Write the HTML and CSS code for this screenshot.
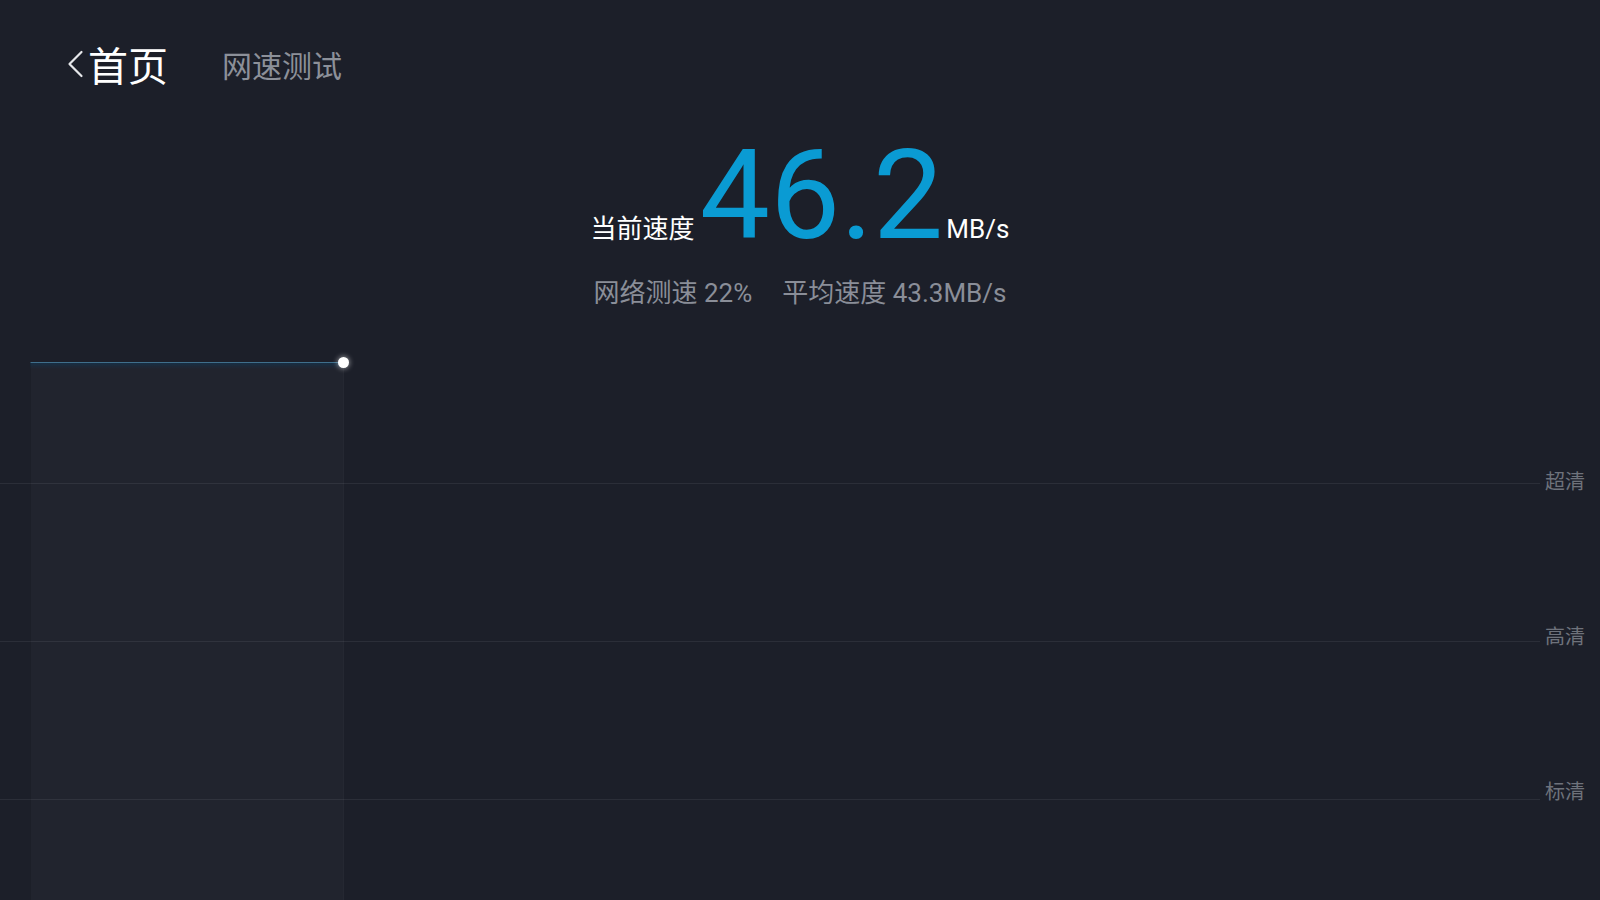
FILE: index.html
```html
<!DOCTYPE html>
<html lang="zh-CN">
<head>
<meta charset="utf-8">
<title>网速测试</title>
<link rel="stylesheet" href="styles.css">
</head>
<body>
<div class="page">
  <header class="header">
    <div class="back">
      <svg class="back-icon" width="18" height="28" viewBox="0 0 18 28"><path d="M15.5 2 L3.5 14 L15.5 26" fill="none" stroke="#e6e7ea" stroke-width="2.2" stroke-linecap="round" stroke-linejoin="round"/></svg>
      <span class="back-text">首页</span>
    </div>
    <span class="title">网速测试</span>
  </header>

  <section class="speed">
    <div class="speed-main">
      <span class="speed-label">当前速度</span><span class="speed-value">46.2</span><span class="speed-unit">MB/s</span>
    </div>
    <div class="speed-sub">
      <span>网络测速 22%</span>
      <span>平均速度 43.3MB/s</span>
    </div>
  </section>

  <section class="chart">
    <div class="grid-line" style="top:143px"><span class="grid-label label-1">超清</span></div>
    <div class="grid-line" style="top:301px"><span class="grid-label label-2">高清</span></div>
    <div class="grid-line" style="top:459px"><span class="grid-label label-3">标清</span></div>
    <div class="bar" style="left:30px;width:314px;top:22px"></div>
    <div class="dot" style="left:344px;top:22px"></div>
  </section>
</div>
</body>
</html>
```

FILE: styles.css
```css
* { box-sizing: border-box; }
html, body {
  margin: 0;
  padding: 0;
  width: 1600px;
  height: 900px;
  overflow: hidden;
  background: #1c1f29;
  font-family: "Roboto", "Noto Sans CJK SC", sans-serif;
}
.page {
  display: flex;
  flex-direction: column;
  height: 900px;
}
.header {
  display: flex;
  align-items: center;
  padding: 43px 0 0 66px;
  height: 85px;
  gap: 54px;
}
.back {
  display: flex;
  align-items: center;
  gap: 4px;
}
.back-icon { display: block; margin-top: -1px; }
.back-text {
  font-size: 40px;
  line-height: 40px;
  color: #ffffff;
  font-family: "Noto Sans CJK SC", sans-serif;
}
.title {
  font-size: 30px;
  line-height: 40px;
  color: #8c9099;
  font-family: "Noto Sans CJK SC", sans-serif;
}
.speed {
  margin-top: 47px;
  text-align: center;
}
.speed-main {
  height: 128px;
  line-height: 128px;
  white-space: nowrap;
}
.speed-label {
  font-size: 26px;
  line-height: 26px;
  color: #ffffff;
  margin-right: 5px;
  font-family: "Noto Sans CJK SC", sans-serif;
}
.speed-value {
  font-size: 125px;
  font-weight: 400;
  color: #0a9bd3;
  line-height: 128px;
}
.speed-unit {
  font-size: 26px;
  line-height: 26px;
  color: #ffffff;
  margin-left: 3px;
}
.speed-sub {
  margin-top: 20px;
  display: flex;
  justify-content: center;
  gap: 30px;
  font-size: 26px;
  line-height: 26px;
  color: #8a8e98;
}
.chart {
  position: relative;
  flex: 1;
  margin-top: 34px;
}
.grid-line {
  position: absolute;
  left: 0;
  width: 1540px;
  height: 1px;
  background: #2b2e38;
}
.grid-label {
  position: absolute;
  left: 1545px;
  font-size: 20px;
  line-height: 22px;
  color: #6e727b;
  white-space: nowrap;
  font-family: "Noto Sans CJK SC", sans-serif;
}
.label-1 { top: -13px; }
.label-2 { top: -16px; }
.label-3 { top: -19px; }
.bar {
  position: absolute;
  bottom: 0;
  background: linear-gradient(to bottom, rgba(20, 60, 90, 0.55) 0px, rgba(255,255,255,0.025) 6px, rgba(255,255,255,0.025) 100%);
  border-top: 1px solid #3f6f8c;
  border-left: 1px solid rgba(0,0,0,0.12);
  border-right: 1px solid rgba(255,255,255,0.02);
}
.dot {
  position: absolute;
  width: 11px;
  height: 11px;
  margin: -5px 0 0 -6px;
  border-radius: 50%;
  background: #ffffff;
  box-shadow: 0 0 5px 1px rgba(255,255,255,0.45);
}
```
